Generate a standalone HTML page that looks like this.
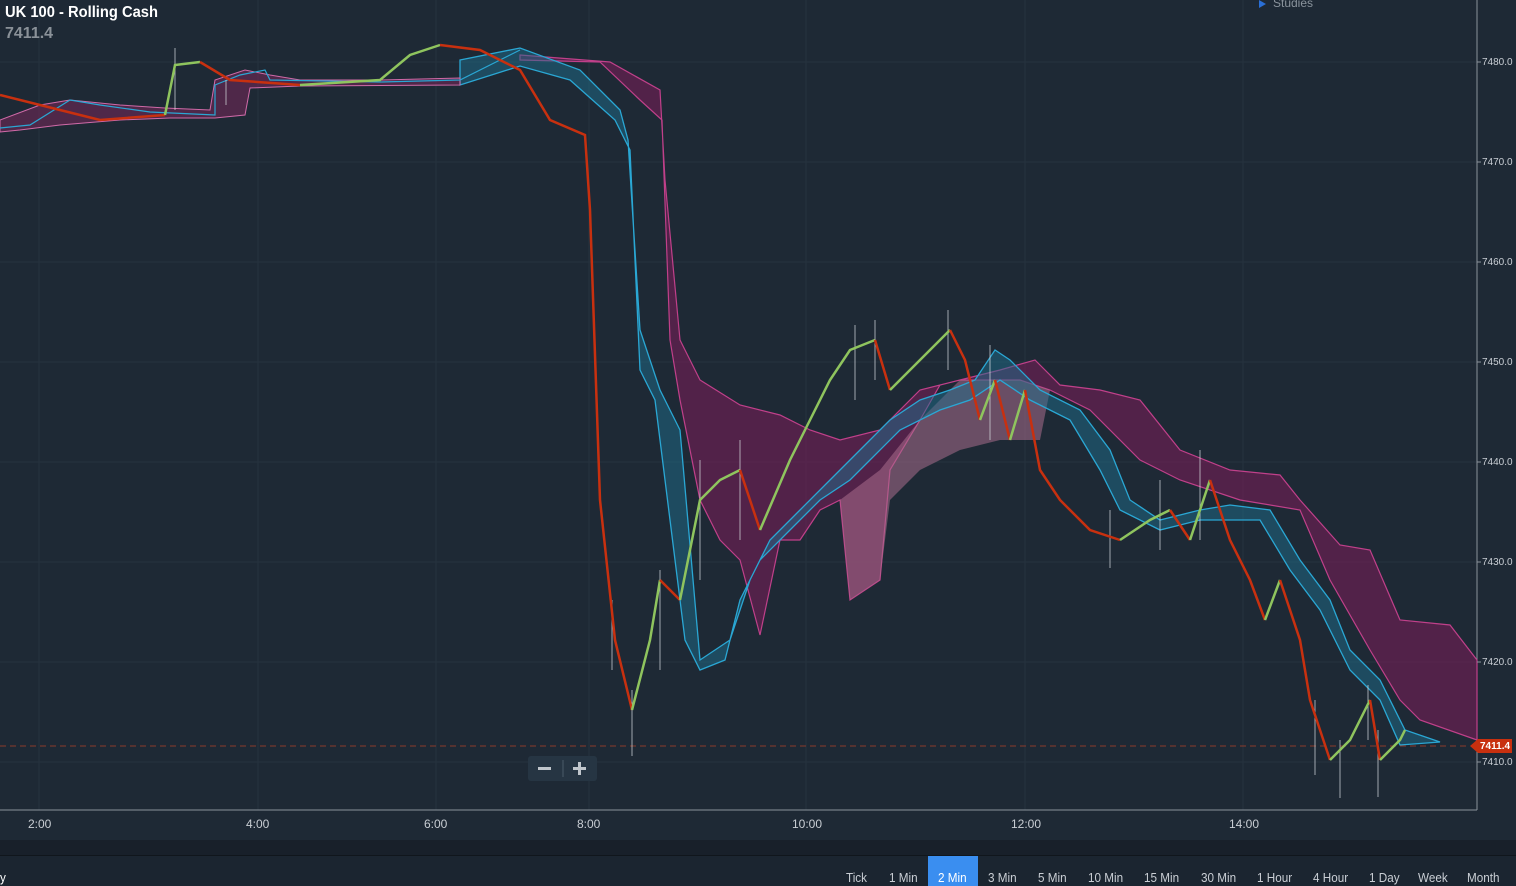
<!DOCTYPE html>
<html><head><meta charset="utf-8"><style>
body{margin:0;width:1516px;height:885px;background:#1e2935;overflow:hidden;font-family:"Liberation Sans",sans-serif;position:relative}
.t{position:absolute;color:#fff;font-weight:bold}
.bar{position:absolute;left:0;top:855px;width:1516px;height:30px;background:#1b2530;border-top:1px solid #10161c}
.bar span{position:absolute;top:14px;font-size:13px;color:#c9ced4;transform:scaleX(.9);transform-origin:left}
.ax{position:absolute;font-size:12px;color:#c9ced4}
</style></head><body>
<svg width="1516" height="885" style="position:absolute;left:0;top:0">
<rect x="0" y="840" width="1516" height="15" fill="#18202a"/>
<g stroke="#26333f" stroke-width="1">
<line x1="0" y1="62" x2="1477" y2="62"/><line x1="0" y1="162" x2="1477" y2="162"/><line x1="0" y1="262" x2="1477" y2="262"/><line x1="0" y1="362" x2="1477" y2="362"/><line x1="0" y1="462" x2="1477" y2="462"/><line x1="0" y1="562" x2="1477" y2="562"/><line x1="0" y1="662" x2="1477" y2="662"/><line x1="0" y1="762" x2="1477" y2="762"/>
<line x1="39" y1="0" x2="39" y2="810"/><line x1="258" y1="0" x2="258" y2="810"/><line x1="436" y1="0" x2="436" y2="810"/><line x1="589" y1="0" x2="589" y2="810"/><line x1="806" y1="0" x2="806" y2="810"/><line x1="1025" y1="0" x2="1025" y2="810"/><line x1="1243" y1="0" x2="1243" y2="810"/>
</g>
<line x1="1477" y1="0" x2="1477" y2="810" stroke="#8a939c"/><line x1="0" y1="810" x2="1477" y2="810" stroke="#8a939c"/>
<polygon points="520,55 610,62 660,90 665,180 680,340 700,380 740,405 780,415 810,430 840,440 880,430 920,390 960,380 1000,370 1035,360 1060,385 1100,390 1140,400 1180,450 1230,470 1280,475 1300,500 1340,545 1370,550 1400,620 1450,625 1477,660 1477,740 1420,720 1400,700 1370,650 1330,580 1300,510 1240,500 1180,480 1140,460 1090,410 1050,390 1020,380 990,380 960,380 940,385 920,420 890,470 880,580 850,600 840,500 820,510 800,540 780,540 760,635 740,560 720,540 700,500 680,400 670,340 662,120 640,100 600,62 520,60" fill="rgba(110,30,85,0.65)" stroke="#c0408a" stroke-width="1.2"/>
<polygon points="840,500 880,470 920,420 960,380 990,380 1020,380 1050,390 1040,440 1000,440 960,450 920,470 890,500 880,580 850,600" fill="rgba(170,110,140,0.55)"/>
<polygon points="460,60 520,48 580,70 620,110 628,140 640,330 660,390 680,430 700,660 730,640 750,580 770,540 800,510 830,480 850,460 870,440 890,420 920,400 950,390 975,380 995,350 1010,360 1040,390 1080,410 1110,450 1130,500 1160,520 1200,510 1230,505 1270,510 1300,560 1330,600 1350,650 1380,680 1405,730 1440,742 1400,745 1380,700 1350,670 1320,610 1290,570 1260,520 1200,520 1160,530 1120,510 1100,470 1070,420 1030,400 1000,380 970,400 940,410 900,430 870,460 850,480 820,500 790,530 760,560 740,600 725,660 700,670 685,640 670,520 655,400 640,370 630,150 615,120 570,80 520,66 460,85" fill="rgba(30,110,140,0.5)" stroke="#2aa7d4" stroke-width="1.3"/>
<polygon points="0,120 40,105 70,100 120,105 165,108 210,110 215,80 245,70 270,75 300,80 380,80 460,78 460,85 300,86 250,88 245,115 215,118 170,118 120,120 60,125 20,130 0,132" fill="rgba(120,40,90,0.55)" stroke="#d06aa8" stroke-width="1"/>
<polyline points="0,128 30,125 70,100 100,105 150,112 215,115 215,85 240,75 265,70 270,80 380,82 460,80 520,50" fill="none" stroke="#2aa7d4" stroke-width="1.2"/>
<line x1="0" y1="746" x2="1470" y2="746" stroke="#8c3a2c" stroke-dasharray="6,4"/>
<g stroke="#d8dde2" stroke-width="1" opacity="0.7">
<line x1="175" y1="48" x2="175" y2="110"/><line x1="226" y1="80" x2="226" y2="105"/><line x1="632" y1="690" x2="632" y2="756"/><line x1="612" y1="600" x2="612" y2="670"/><line x1="660" y1="570" x2="660" y2="670"/><line x1="700" y1="460" x2="700" y2="580"/><line x1="740" y1="440" x2="740" y2="540"/><line x1="855" y1="325" x2="855" y2="400"/><line x1="875" y1="320" x2="875" y2="380"/><line x1="948" y1="310" x2="948" y2="370"/><line x1="990" y1="345" x2="990" y2="440"/><line x1="1110" y1="510" x2="1110" y2="568"/><line x1="1160" y1="480" x2="1160" y2="550"/><line x1="1200" y1="450" x2="1200" y2="540"/><line x1="1315" y1="700" x2="1315" y2="775"/><line x1="1340" y1="740" x2="1340" y2="798"/><line x1="1378" y1="730" x2="1378" y2="797"/><line x1="1368" y1="685" x2="1368" y2="740"/></g>
<g fill="none" stroke-width="2.5" stroke-linecap="butt">
<polyline stroke="#c8300f" points="0,95 60,110 100,120 165,115"/>
<polyline stroke="#8fc45e" points="165,115 175,65 200,62"/>
<polyline stroke="#c8300f" points="200,62 230,80 300,85"/>
<polyline stroke="#8fc45e" points="300,85 380,80 410,55 440,45"/>
<polyline stroke="#c8300f" points="440,45 480,50 520,70 550,120 585,135 590,210 600,500 615,640 632,710"/>
<polyline stroke="#8fc45e" points="632,710 650,640 660,580"/>
<polyline stroke="#c8300f" points="660,580 680,600"/>
<polyline stroke="#8fc45e" points="680,600 700,500 720,480 740,470"/>
<polyline stroke="#c8300f" points="740,470 760,530"/>
<polyline stroke="#8fc45e" points="760,530 790,460 810,420 830,380 850,350 875,340"/>
<polyline stroke="#c8300f" points="875,340 890,390"/>
<polyline stroke="#8fc45e" points="890,390 910,370 930,350 950,330"/>
<polyline stroke="#c8300f" points="950,330 965,360 980,420"/>
<polyline stroke="#8fc45e" points="980,420 995,380"/>
<polyline stroke="#c8300f" points="995,380 1010,440"/>
<polyline stroke="#8fc45e" points="1010,440 1025,390"/>
<polyline stroke="#c8300f" points="1025,390 1040,470 1060,500 1090,530 1120,540"/>
<polyline stroke="#8fc45e" points="1120,540 1150,520 1170,510"/>
<polyline stroke="#c8300f" points="1170,510 1190,540"/>
<polyline stroke="#8fc45e" points="1190,540 1210,480"/>
<polyline stroke="#c8300f" points="1210,480 1230,540 1250,580 1265,620"/>
<polyline stroke="#8fc45e" points="1265,620 1280,580"/>
<polyline stroke="#c8300f" points="1280,580 1300,640 1310,700 1330,760"/>
<polyline stroke="#8fc45e" points="1330,760 1350,740 1370,700"/>
<polyline stroke="#c8300f" points="1370,700 1380,760"/>
<polyline stroke="#8fc45e" points="1380,760 1400,740 1405,730"/>
</g>
<path d="M1470,746 l8,-7 h34 v14 h-34z" fill="#c8300f"/>
<rect x="528" y="756" width="69" height="25" rx="3" fill="#263543"/>
<line x1="563" y1="760" x2="563" y2="777" stroke="#4a5a68"/>
<rect x="538" y="767" width="13" height="3" fill="#c0c6cc"/><rect x="573" y="767" width="13" height="3" fill="#c0c6cc"/><rect x="578" y="762" width="3" height="13" fill="#c0c6cc"/>
<g stroke="#8a939c"><line x1="1477" y1="62" x2="1481" y2="62"/><line x1="1477" y1="162" x2="1481" y2="162"/><line x1="1477" y1="262" x2="1481" y2="262"/><line x1="1477" y1="362" x2="1481" y2="362"/><line x1="1477" y1="462" x2="1481" y2="462"/><line x1="1477" y1="562" x2="1481" y2="562"/><line x1="1477" y1="662" x2="1481" y2="662"/><line x1="1477" y1="762" x2="1481" y2="762"/></g>
<path d="M1259,0 l7,4 l-7,4z" fill="#2a6fd6"/>
</svg>
<div class="t" style="left:5px;top:4px;font-size:16px;transform:scaleX(.92);transform-origin:left">UK 100 - Rolling Cash</div>
<div class="t" style="left:5px;top:25px;font-size:16px;color:#8a9198">7411.4</div>
<div class="ax" style="left:1273px;top:-4px;font-size:12px;color:#8a939c">Studies</div>
<div class="ax" style="left:1482px;top:57px;font-size:10px">7480.0</div>
<div class="ax" style="left:1482px;top:157px;font-size:10px">7470.0</div>
<div class="ax" style="left:1482px;top:257px;font-size:10px">7460.0</div>
<div class="ax" style="left:1482px;top:357px;font-size:10px">7450.0</div>
<div class="ax" style="left:1482px;top:457px;font-size:10px">7440.0</div>
<div class="ax" style="left:1482px;top:557px;font-size:10px">7430.0</div>
<div class="ax" style="left:1482px;top:657px;font-size:10px">7420.0</div>
<div class="ax" style="left:1482px;top:757px;font-size:10px">7410.0</div>
<div class="ax" style="left:1480px;top:741px;font-size:10px;color:#fff;font-weight:bold">7411.4</div>
<div class="ax" style="left:28px;top:817px">2:00</div>
<div class="ax" style="left:246px;top:817px">4:00</div>
<div class="ax" style="left:424px;top:817px">6:00</div>
<div class="ax" style="left:577px;top:817px">8:00</div>
<div class="ax" style="left:792px;top:817px">10:00</div>
<div class="ax" style="left:1011px;top:817px">12:00</div>
<div class="ax" style="left:1229px;top:817px">14:00</div>
<div class="bar">
<span style="left:0;color:#fff">y</span>
<div style="position:absolute;left:928px;top:0;width:50px;height:30px;background:#3a8ef0"></div>
<span style="left:846px">Tick</span><span style="left:889px">1 Min</span><span style="left:938px;color:#fff">2 Min</span><span style="left:988px">3 Min</span><span style="left:1038px">5 Min</span><span style="left:1088px">10 Min</span><span style="left:1144px">15 Min</span><span style="left:1201px">30 Min</span><span style="left:1257px">1 Hour</span><span style="left:1313px">4 Hour</span><span style="left:1369px">1 Day</span><span style="left:1418px">Week</span><span style="left:1467px">Month</span>
</div>
</body></html>
